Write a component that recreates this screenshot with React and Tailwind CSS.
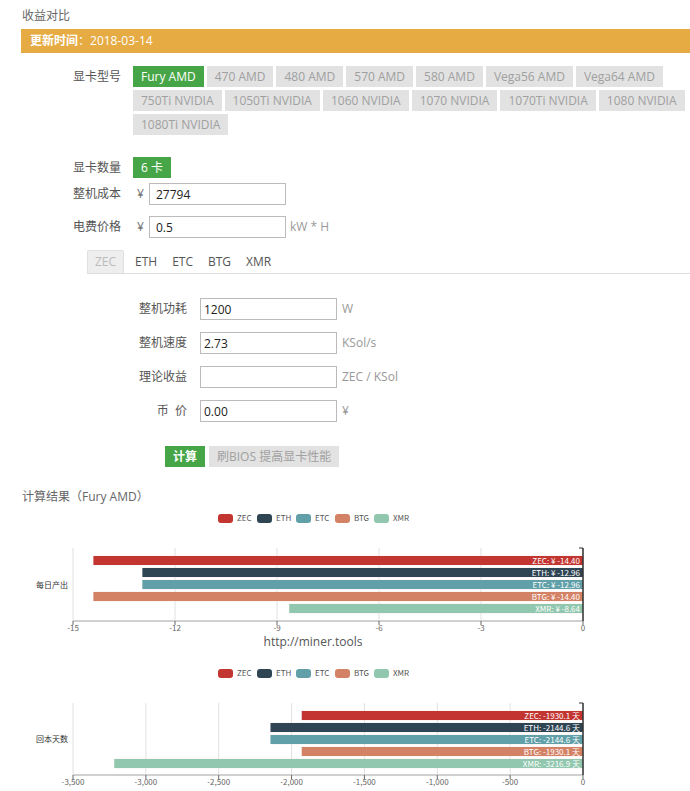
const models = [
  'Fury AMD', '470 AMD', '480 AMD', '570 AMD', '580 AMD', 'Vega56 AMD', 'Vega64 AMD',
  '750Ti NVIDIA', '1050Ti NVIDIA', '1060 NVIDIA', '1070 NVIDIA', '1070Ti NVIDIA', '1080 NVIDIA',
  '1080Ti NVIDIA',
];

const coins = [
  { name: 'ZEC', color: '#c23531' },
  { name: 'ETH', color: '#2f4554' },
  { name: 'ETC', color: '#61a0a8' },
  { name: 'BTG', color: '#d48265' },
  { name: 'XMR', color: '#91c7ae' },
];

const daily = [-14.4, -12.96, -12.96, -14.4, -8.64];
const payback = [-1930.1, -2144.6, -2144.6, -1930.1, -3216.9];

function Legend({ y }) {
  const xs = [218, 257, 296, 335, 374];
  return (
    <g>
      {coins.map((c, i) => (
        <g key={c.name}>
          <rect x={xs[i]} y={y - 4} width="15" height="9" rx="3" fill={c.color} />
          <text x={xs[i] + 19} y={y + 3} fontSize="8" fill="#555">{c.name}</text>
        </g>
      ))}
    </g>
  );
}

function BarChart({ height, legendY, top, bottom, ticks, min, values, barTops, category, fmt, note }) {
  const left = 73;
  const right = 583;
  const sx = (v) => right - (v / min) * (right - left);
  return (
    <svg width="690" height={height} className="block" style={{ fontFamily: '"Noto Sans CJK SC", "Open Sans", sans-serif' }}>
      <Legend y={legendY} />
      {ticks.map((t) => (
        <line key={t} x1={sx(t)} x2={sx(t)} y1={top} y2={bottom} stroke="#e0e0e0" strokeWidth="1" />
      ))}
      {values.map((v, i) => (
        <g key={i}>
          <rect x={sx(v)} y={barTops[i] - 0.5} width={right - sx(v)} height="10" fill="#f4e6e6" opacity="0.6" />
          <rect x={sx(v)} y={barTops[i]} width={right - sx(v)} height="9" fill={coins[i].color} />
          <text x={right - 3} y={barTops[i] + 7.5} fontSize="8" fill="#fff" textAnchor="end">
            {coins[i].name}: {fmt(v)}
          </text>
        </g>
      ))}
      <line x1={left} x2={right} y1={bottom} y2={bottom} stroke="#d0d0d0" strokeWidth="2" />
      {ticks.map((t) => (
        <line key={'k' + t} x1={sx(t)} x2={sx(t)} y1={bottom} y2={bottom + 4} stroke="#666" strokeWidth="1" />
      ))}
      <line x1={right} x2={right} y1={top} y2={bottom} stroke="#333" strokeWidth="1.5" />
      <line x1={right - 4} x2={right} y1={top} y2={top} stroke="#333" strokeWidth="1" />
      {ticks.map((t) => (
        <text key={'l' + t} x={sx(t)} y={bottom + 10} fontSize="8" fill="#666" textAnchor="middle">
          {t === 0 ? '0' : t.toLocaleString('en-US')}
        </text>
      ))}
      <text x={68} y={(top + bottom) / 2 + 3} fontSize="8" fill="#333" textAnchor="end">{category}</text>
      {note && (
        <text x={313} y={bottom + 25} fontSize="12" fill="#555" textAnchor="middle" style={{ fontFamily: '"Open Sans", sans-serif' }}>
          {note}
        </text>
      )}
    </svg>
  );
}

function Btn({ active, children, className = '' }) {
  return (
    <span
      className={
        'inline-flex h-[21px] items-center px-[8px] leading-none ' +
        (active ? 'bg-[#46a546] text-white ' : 'bg-[#e2e2e2] text-[#a0a0a0] ') +
        className
      }
    >
      {children}
    </span>
  );
}

function Field({ label, value, unit }) {
  return (
    <div className="flex h-[22px] items-center">
      <div className="w-[187px] text-right text-[#555]">{label}</div>
      <input
        readOnly
        value={value}
        className="ml-[13px] h-[22px] w-[137px] border border-[#bbb] px-[3px] text-[#222] outline-none"
      />
      <span className="ml-[5px] text-[#999]">{unit}</span>
    </div>
  );
}

export default function App() {
  return (
    <div
      className="w-[690px] overflow-hidden bg-white text-[12px] leading-[18px] text-[#555]"
      style={{ fontFamily: '"Open Sans", "Noto Sans CJK SC", sans-serif' }}
    >
      <div className="pl-[22px] pt-[7px] text-[#666]">收益对比</div>

      <div className="ml-[21px] mt-[4px] flex h-[24px] items-center bg-[#e6ab43] px-[9px] text-white">
        <span className="font-bold">更新时间</span>：2018-03-14
      </div>

      <div className="mt-[13px] flex">
        <div className="w-[133px] shrink-0 pl-[73px] leading-[21px]">显卡型号</div>
        <div className="flex w-[557px] flex-wrap gap-x-[3px] gap-y-[3px]">
          {models.map((m, i) => (
            <Btn key={m} active={i === 0}>{m}</Btn>
          ))}
        </div>
      </div>

      <div className="mt-[22px] flex items-center">
        <div className="w-[133px] pl-[73px]">显卡数量</div>
        <Btn active>6 卡</Btn>
      </div>

      <div className="mt-[5px] flex items-center">
        <div className="w-[133px] pl-[73px]">整机成本</div>
        <span className="ml-[4px] w-[12px] text-[#777]">¥</span>
        <input readOnly value="27794" className="h-[22px] w-[137px] border border-[#bbb] px-[6px] text-[#222] outline-none" />
      </div>

      <div className="mt-[11px] flex items-center">
        <div className="w-[133px] pl-[73px]">电费价格</div>
        <span className="ml-[4px] w-[12px] text-[#777]">¥</span>
        <input readOnly value="0.5" className="h-[22px] w-[137px] border border-[#bbb] px-[6px] text-[#222] outline-none" />
        <span className="ml-[4px] text-[#999]">kW * H</span>
      </div>

      <div className="ml-[87px] mt-[12px] flex h-[24px] border-b border-[#ddd]">
        <div className="flex w-[37px] items-center justify-center rounded-t-[2px] border border-b-0 border-[#e0e0e0] bg-[#eee] text-[#bbb]">ZEC</div>
        <div className="flex items-center pl-[11px] text-[#555]">ETH</div>
        <div className="flex items-center pl-[15px] text-[#555]">ETC</div>
        <div className="flex items-center pl-[15px] text-[#555]">BTG</div>
        <div className="flex items-center pl-[15px] text-[#555]">XMR</div>
      </div>

      <div className="mt-[24px] flex flex-col gap-[12px]">
        <Field label="整机功耗" value="1200" unit="W" />
        <Field label="整机速度" value="2.73" unit="KSol/s" />
        <Field label="理论收益" value="" unit="ZEC / KSol" />
        <Field label={<span>币&nbsp;&nbsp;价</span>} value="0.00" unit="¥" />
      </div>

      <div className="ml-[165px] mt-[24px] flex gap-[4px]">
        <Btn active className="px-[7px] font-bold">计算</Btn>
        <Btn className="px-[7px]">刷BIOS 提高显卡性能</Btn>
      </div>

      <div className="mt-[21px] pl-[22px] text-[#666]">计算结果（Fury AMD）</div>

      <BarChart
        height={144}
        legendY={12}
        top={42}
        bottom={115}
        ticks={[-15, -12, -9, -6, -3, 0]}
        min={-15}
        values={daily}
        barTops={[50, 62, 74, 86, 98]}
        category="每日产出"
        fmt={(v) => '¥ ' + v.toFixed(2)}
        note="http://miner.tools"
      />
      <BarChart
        height={141}
        legendY={23}
        top={53}
        bottom={125}
        ticks={[-3500, -3000, -2500, -2000, -1500, -1000, -500, 0]}
        min={-3500}
        values={payback}
        barTops={[61, 73, 85, 97, 109]}
        category="回本天数"
        fmt={(v) => v.toFixed(1) + ' 天'}
      />
    </div>
  );
}
